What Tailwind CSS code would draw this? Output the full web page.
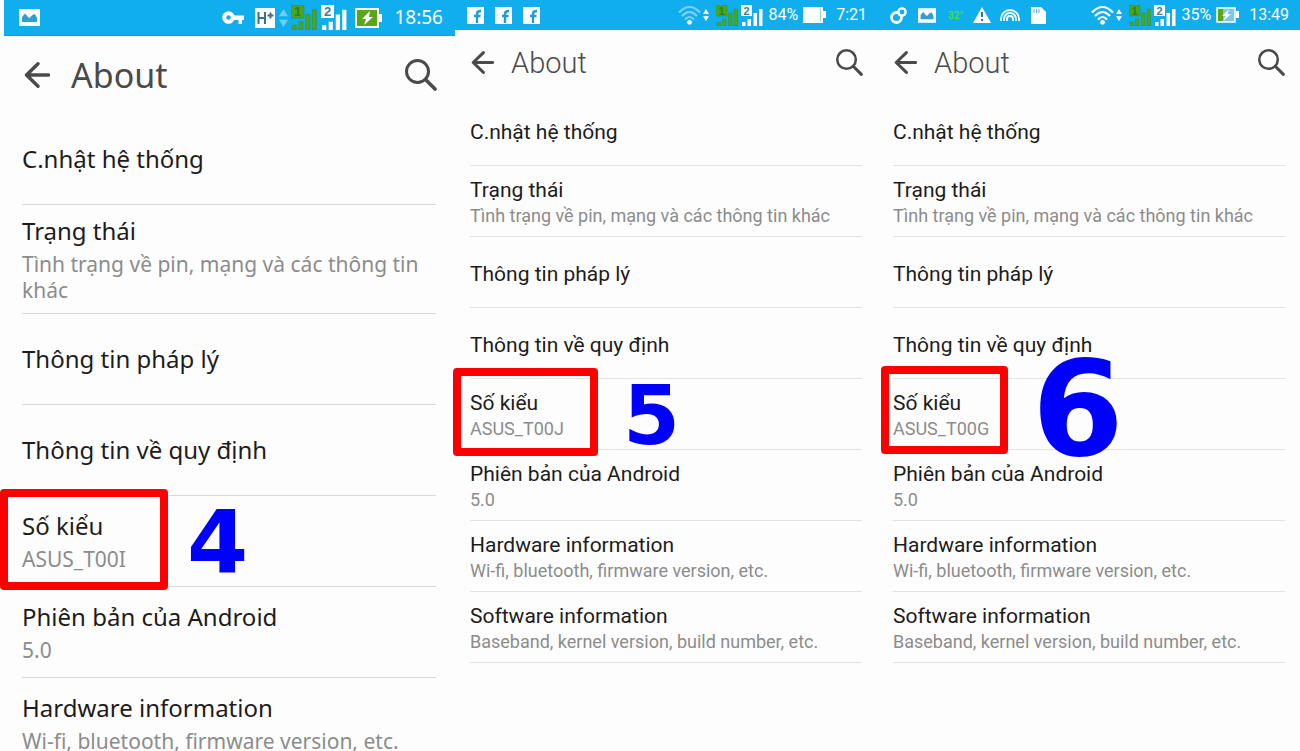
<!DOCTYPE html>
<html lang="vi">
<head>
    <meta charset="UTF-8"/>
    <meta name="viewport" content="width=device-width, initial-scale=1.0"/>
    <title>About</title>
    <script src="https://cdn.jsdelivr.net/npm/@tailwindcss/browser@4"></script>
</head>
<body class="bg-[#fdfdfd]">

<!-- shared icons -->
<svg class="hidden">
    <symbol id="back" viewBox="0 0 26 26">
        <path d="M14 1.800 2.500 13 14 24.200M3 13h21.500" fill="none" stroke="currentColor" stroke-width="3.400" stroke-linecap="round" stroke-linejoin="round"/>
    </symbol>
    <symbol id="search" viewBox="0 0 32 32">
        <circle cx="12.500" cy="12.500" r="11" fill="none" stroke="currentColor" stroke-width="3"/>
        <path d="M20.500 20.500 30 30" fill="none" stroke="currentColor" stroke-width="3.600" stroke-linecap="round"/>
    </symbol>
    <symbol id="image" viewBox="0 0 21 17">
        <path fill="#fff" d="M0 0h21v17H0z"/>
        <path fill="#2d9fd0" d="M3 13V8l3-3.500L9 8l1.500 1 3-3 2.500-1 2 4v4z"/>
    </symbol>
    <symbol id="facebook" viewBox="0 0 17 17">
        <path fill="#fff" d="M0 0h17v17H0z"/>
        <path fill="none" stroke="#1b9fd6" stroke-width="2.400" d="M10 16V7q0-3 4-3M7 9h6.500"/>
    </symbol>
    <symbol id="arrows" viewBox="0 0 8 16">
        <path d="M4 0l4 6.500H0zM4 16l4-6.500H0z" fill="currentColor"/>
    </symbol>
    <symbol id="wifi" viewBox="0 0 23 20">
        <g fill="none" stroke="currentColor" stroke-width="2.200">
            <path d="M1 7.500q10.500-11 21 0"/>
            <path d="M4 11q7.500-8 15 0"/>
            <path d="M7 14.500q4.500-5 9 0"/>
        </g>
        <circle cx="11.500" cy="17.300" r="2.400" fill="#fff"/>
    </symbol>
    <symbol id="sim1" viewBox="0 0 22 21">
        <path fill="#4aa818" stroke="#2e8f4c" stroke-width=".5" d="M0 0h11v11H0zM1 17h3.500v4H1zM6.500 14H10v7H6.500zM12.500 8H16v13h-3.500zM18 4h3.500v17H18z"/>
        <text x="5.500" y="9.500" text-anchor="middle" font-family="Liberation Sans" font-weight="700" font-size="11" fill="#2b7a35">1</text>
    </symbol>
    <symbol id="sim2" viewBox="0 0 22 21">
        <path fill="#fff" d="M0 0h11v11H0zM1 17h3.500v4H1zM6.500 14H10v7H6.500zM12.500 8H16v13h-3.500zM18 4h3.500v17H18z"/>
        <text x="5.500" y="9.500" text-anchor="middle" font-family="Liberation Sans" font-weight="700" font-size="11" fill="#3f7f95">2</text>
    </symbol>
</svg>

<main class="grid h-screen grid-cols-[455fr_423fr_422fr] overflow-hidden text-[#1c1c1c]">

    <!-- phone 4 -->
    <section class="font-['Noto_Sans',sans-serif]">
        <div class="ml-1 flex h-9 items-center border-b border-[#2a98cc] bg-[#10aeec] pl-[15px] pr-3 text-white">
            <svg class="h-[17px] w-[21px]"><use href="#image"/></svg>
            <svg class="ml-auto h-[14px] w-[22px]" viewBox="0 0 22 14">
                <circle cx="6.500" cy="6.500" r="4.300" fill="none" stroke="#fff" stroke-width="4"/>
                <path d="M11 4.500h11v4.500h-2v4h-3.500V9H11z" fill="#fff"/>
            </svg>
            <svg class="ml-[11px] h-5 w-5" viewBox="0 0 20 20">
                <path fill="#fff" d="M0 0h20v20H0z"/>
                <path d="M3.500 4v12M10 4v12M3.500 10H10M12.500 7.500h6M15.500 4.500v6" fill="none" stroke="#37718a" stroke-width="2"/>
            </svg>
            <svg class="ml-1 h-[18px] w-[9px] text-[#6fd0f7]"><use href="#arrows"/></svg>
            <svg class="ml-[3px] h-[25px] w-[26px]"><use href="#sim1"/></svg>
            <svg class="ml-1 h-[25px] w-[26px]"><use href="#sim2"/></svg>
            <svg class="ml-2 h-5 w-7" viewBox="0 0 28 20">
                <path d="M1 1h22v18H1z" fill="#5aa614" stroke="#fff" stroke-width="2"/>
                <path d="M24 6h3v8h-3z" fill="#fff"/>
                <path d="M15 3 7 11h4l-2 6 9-8h-4z" fill="#fff"/>
            </svg>
            <span class="ml-[11px] text-[19px]">18:56</span>
        </div>
        <header class="flex h-[78px] items-center pl-6 pr-[18px] text-[#4a4a4a]">
            <button aria-label="Back"><svg class="h-[26px] w-[26px]"><use href="#back"/></svg></button>
            <h1 class="ml-[21px] text-[34px]">About</h1>
            <button aria-label="Search" class="ml-auto"><svg class="h-8 w-8"><use href="#search"/></svg></button>
        </header>
        <ul class="ml-[22px] mr-[19px] text-[24px] leading-10">
            <li class="flex min-h-[91px] flex-col justify-center border-b border-[#d8d8d8]">
                <a href="#">C.nhật hệ thống</a>
            </li>
            <li class="flex min-h-[91px] flex-col justify-center border-b border-[#d8d8d8] py-[6px]">
                <a href="#">Trạng thái</a>
                <p class="pb-1 text-[21px] leading-[26px] text-[#8c8c8c]">Tình trạng về pin, mạng và các thông tin khác</p>
            </li>
            <li class="flex min-h-[91px] flex-col justify-center border-b border-[#d8d8d8]">
                <a href="#">Thông tin pháp lý</a>
            </li>
            <li class="flex min-h-[91px] flex-col justify-center border-b border-[#d8d8d8]">
                <a href="#">Thông tin về quy định</a>
            </li>
            <li class="relative flex min-h-[91px] flex-col justify-center border-b border-[#d8d8d8]">
                <a href="#">Số kiểu</a>
                <p class="pb-1 text-[21px] leading-[26px] text-[#8c8c8c]">ASUS_T00I</p>
                <span class="absolute -left-[22px] -top-[7px] h-[101px] w-[168px] rounded border-8 border-[#fe0000]"></span>
                <b class="absolute bottom-0 left-[165px] top-1 flex items-center font-['DejaVu_Sans',sans-serif] text-[88px] leading-none text-[#0000fe]">4</b>
            </li>
            <li class="flex min-h-[91px] flex-col justify-center border-b border-[#d8d8d8]">
                <a href="#">Phiên bản của Android</a>
                <p class="pb-1 text-[21px] leading-[26px] text-[#8c8c8c]">5.0</p>
            </li>
            <li class="flex min-h-[91px] flex-col justify-center border-b border-[#d8d8d8]">
                <a href="#">Hardware information</a>
                <p class="pb-1 text-[21px] leading-[26px] text-[#8c8c8c]">Wi-fi, bluetooth, firmware version, etc.</p>
            </li>
        </ul>
    </section>

    <!-- phone 5 -->
    <section class="font-[Roboto,sans-serif]">
        <div class="flex h-[30px] items-center bg-[#10aeec] pl-3 pr-[11px] text-white">
            <svg class="h-[17px] w-[17px]"><use href="#facebook"/></svg>
            <svg class="ml-[11px] h-[17px] w-[17px]"><use href="#facebook"/></svg>
            <svg class="ml-[11px] h-[17px] w-[17px]"><use href="#facebook"/></svg>
            <svg class="ml-auto h-5 w-[23px] text-[#7dd3f7]"><use href="#wifi"/></svg>
            <svg class="ml-[2px] h-[14px] w-[6px]"><use href="#arrows"/></svg>
            <svg class="ml-[7px] h-[21px] w-[22px]"><use href="#sim1"/></svg>
            <svg class="ml-[3px] h-[21px] w-[22px]"><use href="#sim2"/></svg>
            <span class="ml-[5px] text-[16px]">84%</span>
            <svg class="ml-[5px] h-4 w-[23px]" viewBox="0 0 23 16">
                <path d="M0 0h20v4h3v7h-3v5H0z" fill="#fff"/>
                <path d="M17.500 1.500v13" stroke="#9cc8da"/>
            </svg>
            <span class="ml-[10px] text-[16px]">7:21</span>
        </div>
        <header class="flex h-[65px] items-center pl-4 pr-[15px] text-[#4a4a4a]">
            <button aria-label="Back"><svg class="h-[23px] w-[23px]"><use href="#back"/></svg></button>
            <h1 class="ml-[17px] pt-[2px] text-[29px] font-light">About</h1>
            <button aria-label="Search" class="ml-auto"><svg class="h-[27px] w-[27px]"><use href="#search"/></svg></button>
        </header>
        <ul class="ml-[15px] mr-4 text-[21px] leading-[26px]">
            <li class="flex min-h-[71px] flex-col justify-center border-b border-[#e2e2e2] pt-[3px]">
                <a href="#">C.nhật hệ thống</a>
            </li>
            <li class="flex min-h-[71px] flex-col justify-center border-b border-[#e2e2e2] pt-[3px]">
                <a href="#">Trạng thái</a>
                <p class="text-[18px] text-[#8c8c8c]">Tình trạng về pin, mạng và các thông tin khác</p>
            </li>
            <li class="flex min-h-[71px] flex-col justify-center border-b border-[#e2e2e2] pt-[3px]">
                <a href="#">Thông tin pháp lý</a>
            </li>
            <li class="flex min-h-[71px] flex-col justify-center border-b border-[#e2e2e2] pt-[3px]">
                <a href="#">Thông tin về quy định</a>
            </li>
            <li class="relative flex min-h-[71px] flex-col justify-center border-b border-[#e2e2e2] pt-[3px]">
                <a href="#">Số kiểu</a>
                <p class="text-[18px] text-[#8c8c8c]">ASUS_T00J</p>
                <span class="absolute -left-[17px] -top-[11px] h-[88px] w-[145px] rounded border-8 border-[#fe0000]"></span>
                <b class="absolute bottom-0 left-[153px] top-1 flex items-center font-['DejaVu_Sans',sans-serif] text-[82px] leading-none text-[#0000fe]">5</b>
            </li>
            <li class="flex min-h-[71px] flex-col justify-center border-b border-[#e2e2e2] pt-[3px]">
                <a href="#">Phiên bản của Android</a>
                <p class="text-[18px] text-[#8c8c8c]">5.0</p>
            </li>
            <li class="flex min-h-[71px] flex-col justify-center border-b border-[#e2e2e2] pt-[3px]">
                <a href="#">Hardware information</a>
                <p class="text-[18px] text-[#8c8c8c]">Wi-fi, bluetooth, firmware version, etc.</p>
            </li>
            <li class="flex min-h-[71px] flex-col justify-center border-b border-[#e2e2e2] pt-[3px]">
                <a href="#">Software information</a>
                <p class="text-[18px] text-[#8c8c8c]">Baseband, kernel version, build number, etc.</p>
            </li>
        </ul>
    </section>

    <!-- phone 6 -->
    <section class="font-[Roboto,sans-serif]">
        <div class="flex h-[30px] items-center bg-[#10aeec] pl-3 pr-[11px] text-white">
            <svg class="h-[17px] w-[17px]" viewBox="0 0 17 17">
                <circle cx="6.500" cy="10.500" r="5" fill="none" stroke="#fff" stroke-width="2.800"/>
                <circle cx="12" cy="5" r="3.600" fill="#10aeec" stroke="#fff" stroke-width="2.400"/>
            </svg>
            <svg class="ml-[11px] h-[15px] w-[18px]"><use href="#image"/></svg>
            <span class="ml-3 text-[10px] font-bold text-[#3fdc5a]">32°</span>
            <svg class="ml-[10px] h-4 w-[18px]" viewBox="0 0 18 16">
                <path d="M9 0l9 16H0z" fill="#fff"/>
                <path d="M9 5v5M9 12v2" stroke="#37718a" stroke-width="2"/>
            </svg>
            <svg class="ml-[9px] h-3 w-5" viewBox="0 0 20 12">
                <g fill="none" stroke="#fff" stroke-width="1.800">
                    <path d="M1 12v-2a9 9 0 0 1 18 0v2"/>
                    <path d="M4 12v-2a6 6 0 0 1 12 0v2"/>
                    <path d="M7 12v-2a3 3 0 0 1 6 0v2"/>
                </g>
            </svg>
            <svg class="ml-[11px] h-[17px] w-[15px]" viewBox="0 0 15 17">
                <path d="M0 0h10l5 5v12H0z" fill="#fff"/>
                <path d="M3 2v4M5.500 2v4M8 2v4" stroke="#5db4d8"/>
            </svg>
            <svg class="ml-auto h-5 w-[23px]"><use href="#wifi"/></svg>
            <svg class="ml-[2px] h-[14px] w-[6px]"><use href="#arrows"/></svg>
            <svg class="ml-[7px] h-[21px] w-[22px]"><use href="#sim1"/></svg>
            <svg class="ml-[3px] h-[21px] w-[22px]"><use href="#sim2"/></svg>
            <span class="ml-[5px] text-[16px]">35%</span>
            <svg class="ml-[5px] h-4 w-[23px]" viewBox="0 0 23 16">
                <path d="M1 1h18v14H1z" fill="#7cc8ea" stroke="#fff" stroke-width="1.500"/>
                <path d="M2 2h5v12H2z" fill="#5aa614"/>
                <path d="M20 4h3v7h-3z" fill="#fff"/>
                <path d="M13 2 6 9h3.500l-2 5L15 7h-3.500z" fill="#fff"/>
            </svg>
            <span class="ml-[10px] text-[16px]">13:49</span>
        </div>
        <header class="flex h-[65px] items-center pl-4 pr-[15px] text-[#4a4a4a]">
            <button aria-label="Back"><svg class="h-[23px] w-[23px]"><use href="#back"/></svg></button>
            <h1 class="ml-[17px] pt-[2px] text-[29px] font-light">About</h1>
            <button aria-label="Search" class="ml-auto"><svg class="h-[27px] w-[27px]"><use href="#search"/></svg></button>
        </header>
        <ul class="mx-[15px] text-[21px] leading-[26px]">
            <li class="flex min-h-[71px] flex-col justify-center border-b border-[#e2e2e2] pt-[3px]">
                <a href="#">C.nhật hệ thống</a>
            </li>
            <li class="flex min-h-[71px] flex-col justify-center border-b border-[#e2e2e2] pt-[3px]">
                <a href="#">Trạng thái</a>
                <p class="text-[18px] text-[#8c8c8c]">Tình trạng về pin, mạng và các thông tin khác</p>
            </li>
            <li class="flex min-h-[71px] flex-col justify-center border-b border-[#e2e2e2] pt-[3px]">
                <a href="#">Thông tin pháp lý</a>
            </li>
            <li class="flex min-h-[71px] flex-col justify-center border-b border-[#e2e2e2] pt-[3px]">
                <a href="#">Thông tin về quy định</a>
            </li>
            <li class="relative flex min-h-[71px] flex-col justify-center border-b border-[#e2e2e2] pt-[3px]">
                <a href="#">Số kiểu</a>
                <p class="text-[18px] text-[#8c8c8c]">ASUS_T00G</p>
                <span class="absolute -left-3 -top-[13px] h-[88px] w-[127px] rounded border-8 border-[#fe0000]"></span>
                <b class="absolute bottom-[10px] left-[139px] top-0 flex items-center font-['DejaVu_Sans',sans-serif] text-[132px] leading-none text-[#0000fe]">6</b>
            </li>
            <li class="flex min-h-[71px] flex-col justify-center border-b border-[#e2e2e2] pt-[3px]">
                <a href="#">Phiên bản của Android</a>
                <p class="text-[18px] text-[#8c8c8c]">5.0</p>
            </li>
            <li class="flex min-h-[71px] flex-col justify-center border-b border-[#e2e2e2] pt-[3px]">
                <a href="#">Hardware information</a>
                <p class="text-[18px] text-[#8c8c8c]">Wi-fi, bluetooth, firmware version, etc.</p>
            </li>
            <li class="flex min-h-[71px] flex-col justify-center border-b border-[#e2e2e2] pt-[3px]">
                <a href="#">Software information</a>
                <p class="text-[18px] text-[#8c8c8c]">Baseband, kernel version, build number, etc.</p>
            </li>
        </ul>
    </section>
</main>
</body>
</html>
